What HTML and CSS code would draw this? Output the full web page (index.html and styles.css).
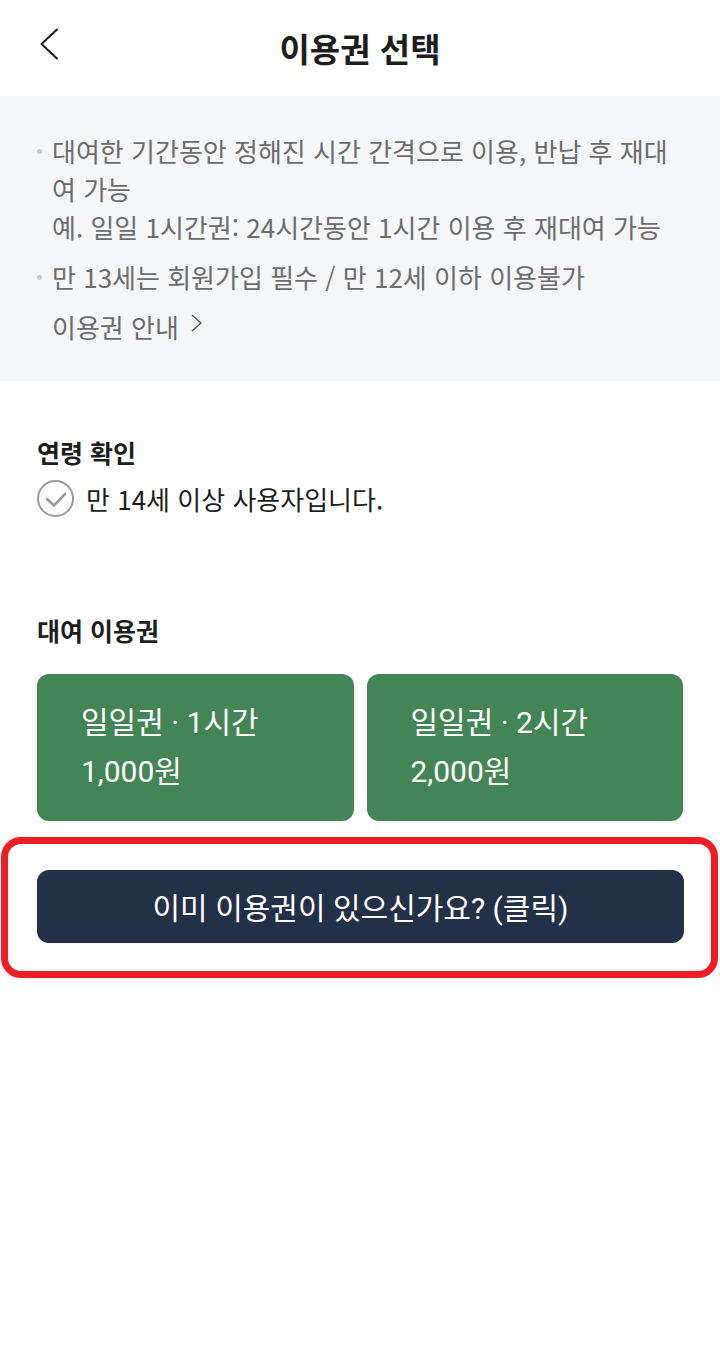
FILE: index.html
```html
<!DOCTYPE html>
<html lang="ko">
<head>
<meta charset="utf-8">
<meta name="viewport" content="width=device-width, initial-scale=1">
<title>이용권 선택</title>
<link rel="stylesheet" href="styles.css">
</head>
<body>
<header class="header">
  <button class="back" type="button" aria-label="뒤로">
    <svg width="20" height="32" viewBox="0 0 20 32" fill="none" stroke="#1a1a1a" stroke-width="2" stroke-linecap="round" stroke-linejoin="round"><path d="M18 1.500 2.500 16 18 30.500"/></svg>
  </button>
  <h1 class="title">이용권 선택</h1>
</header>
<section class="notice">
  <ul class="notice-list">
    <li>대여한 기간동안 정해진 시간 간격으로 이용, 반납 후 재대여 가능<br>예. 일일 1시간권: 24시간동안 1시간 이용 후 재대여 가능</li>
    <li>만 13세는 회원가입 필수 / 만 12세 이하 이용불가</li>
  </ul>
  <a class="guide" href="#guide">이용권 안내
    <svg class="guide-icon" width="12" height="18" viewBox="0 0 12 18" fill="none" stroke="#555" stroke-width="1.400"><path d="m1 1 9 8-9 8"/></svg>
  </a>
</section>
<main class="content">
  <section class="age">
    <h2 class="heading">연령 확인</h2>
    <div class="check">
      <input class="check-box" type="checkbox" id="age">
      <svg class="check-icon" width="37" height="37" viewBox="0 0 37 37" fill="none" stroke="#999" stroke-width="2"><circle cx="18.500" cy="18.500" r="17.500"/><path d="m10 19 7 6.500L28 14" stroke-width="2.600" stroke-linecap="round"/></svg>
      <label for="age">만 14세 이상 사용자입니다.</label>
    </div>
  </section>
  <section class="passes">
    <h2 class="heading">대여 이용권</h2>
    <div class="pass-grid">
      <button class="pass" type="button">일일권 · 1시간<br>1,000원</button>
      <button class="pass" type="button">일일권 · 2시간<br>2,000원</button>
    </div>
  </section>
</main>
<div class="highlight">
  <button class="owned" type="button">이미 이용권이 있으신가요? (클릭)</button>
</div>
</body>
</html>
```
FILE: styles.css
```css
* {
  box-sizing: border-box;
}

body {
  margin: 0;
  background: #fff;
  color: #1e1e1e;
  font-family: "Noto Sans CJK KR", sans-serif;
  font-size: 26px;
}

button {
  font: inherit;
  border: 0;
  cursor: pointer;
}

.header {
  display: grid;
  grid-template-columns: 59px 1fr 59px;
  align-items: center;
  height: 96px;
}

.back {
  display: flex;
  justify-content: flex-end;
  padding: 0 0 8px;
  background: none;
}

.title {
  margin: 0;
  font-size: 33px;
  line-height: 48px;
  font-weight: 700;
  text-align: center;
}

.notice {
  padding: 36px 36px 35px 52px;
  background: #f5f6f8;
  color: #6c6c6c;
  line-height: 38px;
}

.notice-list {
  margin: 0;
  padding: 0;
  list-style: none;
}

.notice-list li {
  position: relative;
  margin-bottom: 12px;
  word-break: break-all;
}

.notice-list li::before {
  content: "";
  position: absolute;
  left: -15px;
  top: 17px;
  width: 5px;
  height: 5px;
  border-radius: 50%;
  background: #c8c8ca;
}

.guide {
  display: inline-flex;
  align-items: center;
  gap: 12px;
  color: inherit;
  text-decoration: none;
}

.guide-icon {
  margin-bottom: 8px;
}

.content {
  padding: 52px 37px 16px;
}

.heading {
  margin: 0;
  font-size: 25px;
  line-height: 38px;
  font-weight: 700;
}

.check {
  position: relative;
  display: flex;
  align-items: center;
  gap: 12px;
  margin: 9px 0 94px;
}

.check-box {
  position: absolute;
  width: 37px;
  height: 37px;
  margin: 0;
  opacity: 0;
}

.pass-grid {
  display: grid;
  grid-template-columns: 1fr 1fr;
  gap: 13px;
  margin-top: 25px;
}

.pass {
  padding: 24px 44px 25px;
  border-radius: 12px;
  background: #448556;
  color: #fff;
  font-family: Roboto, "Noto Sans CJK KR", sans-serif;
  font-size: 30px;
  line-height: 49px;
  text-align: left;
}

.highlight {
  margin: 0 2px 0 1px;
  padding: 26px 27px 28px 29px;
  border: 7px solid #ee1c25;
  border-radius: 20px;
}

.owned {
  display: block;
  width: 100%;
  padding: 14px 12px 10px;
  border-radius: 12px;
  background: #223048;
  color: #fff;
  font-family: Roboto, "Noto Sans CJK KR", sans-serif;
  font-size: 30px;
  line-height: 49px;
}
```
